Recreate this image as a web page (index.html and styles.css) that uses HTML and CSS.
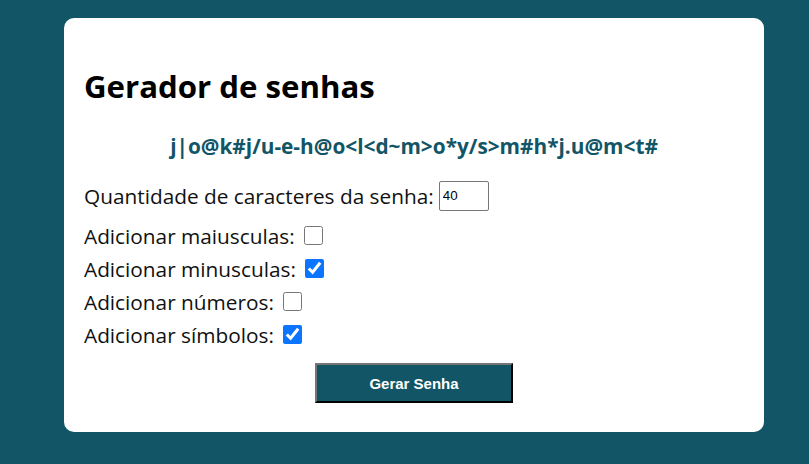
FILE: index.html
```html
<!DOCTYPE html>
<html lang="pt-BR">
<head>
<meta charset="utf-8">
<title>Gerador de senhas</title>
<link rel="stylesheet" href="styles.css">
</head>
<body>
<main class="card">
  <h1 class="title">Gerador de senhas</h1>
  <p class="password">j|o@k#j/u-e-h@o&lt;l&lt;d~m&gt;o*y/s&gt;m#h*j.u@m&lt;t#</p>
  <div class="row row-first">
    <label for="qtd">Quantidade de caracteres da senha:</label>
    <input id="qtd" class="num" type="text" value="40">
  </div>
  <div class="row">
    <label for="mai">Adicionar maiusculas:</label>
    <input id="mai" class="check" type="checkbox">
  </div>
  <div class="row">
    <label for="min">Adicionar minusculas:</label>
    <input id="min" class="check" type="checkbox" checked>
  </div>
  <div class="row">
    <label for="nums">Adicionar números:</label>
    <input id="nums" class="check" type="checkbox">
  </div>
  <div class="row">
    <label for="sym">Adicionar símbolos:</label>
    <input id="sym" class="check" type="checkbox" checked>
  </div>
  <div class="actions">
    <button class="btn" type="button">Gerar Senha</button>
  </div>
</main>
</body>
</html>
```
FILE: styles.css
```css
html, body {
  margin: 0;
  padding: 0;
}
body {
  background: #125566;
  font-family: "Open Sans", "Liberation Sans", sans-serif;
  padding: 18px 0 0 64px;
  height: 464px;
  box-sizing: border-box;
}
.card {
  width: 700px;
  height: 414px;
  box-sizing: border-box;
  background: #fff;
  border-radius: 10px;
  padding: 48px 20px 0 20px;
}
.title {
  margin: 0;
  font-size: 31.2px;
  font-weight: 700;
  line-height: 40px;
  color: #000;
}
.password {
  margin: 26px 0 12px;
  text-align: center;
  font-size: 20.8px;
  font-weight: 700;
  line-height: 28px;
  color: #125566;
}
.row {
  display: flex;
  align-items: center;
  gap: 5px;
  font-size: 20.8px;
  color: #111;
  height: 33px;
}
.row-first {
  height: 47px;
}
.num {
  width: 50px;
  height: 30px;
  box-sizing: border-box;
  border: 1px solid #767676;
  border-radius: 2px;
  padding: 1px 3px;
  font-family: "Liberation Sans", Arial, sans-serif;
  font-size: 13.33px;
  margin: 0;
}
.check {
  width: 19px;
  height: 19px;
  margin: 0 0 0 4px;
  accent-color: #0b75ff;
}
.actions {
  display: flex;
  justify-content: center;
  margin-top: 12px;
}
.btn {
  width: 198px;
  height: 40px;
  background: #125566;
  color: #fff;
  border: 2px outset #767676;
  border-color: #767676 #222 #222 #767676;
  font-family: "Liberation Sans", Arial, sans-serif;
  font-weight: 700;
  font-size: 15px;
  cursor: pointer;
}
```
